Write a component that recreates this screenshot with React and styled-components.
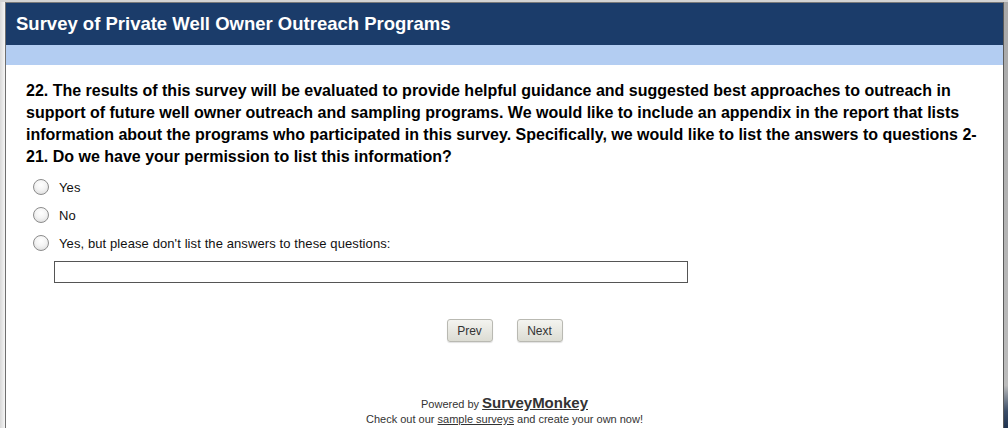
import React from "react";
import styled, { createGlobalStyle } from "styled-components";

const Global = createGlobalStyle`
  html, body { margin: 0; padding: 0; height: 100%; }
  body {
    font-family: "Liberation Sans", Arial, sans-serif;
    background: #ffffff;
    overflow: hidden;
  }
`;

const Screen = styled.div`
  display: flex;
  width: 1008px;
  height: 428px;
  background: #f0f0f0;
  border-top: 2px solid #d4d4d4;
  box-sizing: border-box;
`;

const LeftEdge = styled.div`
  width: 5px;
  flex: none;
  background: linear-gradient(to right, #d8d8d8, #f6f6f6);
`;

const RightEdge = styled.div`
  width: 4px;
  flex: none;
  background: linear-gradient(to bottom, #a8a8a8 0%, #bcbcbc 90%, #3c4e68 96%, #1f3350 100%);
`;

const Window = styled.div`
  flex: 1;
  display: flex;
  flex-direction: column;
  background: #ffffff;
  border-left: 1px solid #6f6f6f;
  border-right: 1px solid #5a5a5a;
  border-top: 1px solid #7a7a7a;
`;

const Header = styled.div`
  background: #1b3c6a;
  height: 42px;
  display: flex;
  align-items: center;
  padding-left: 10px;
  color: #ffffff;
  font-weight: bold;
  font-size: 18.5px;
`;

const SubBar = styled.div`
  background: #b3cdf2;
  height: 20px;
`;

const Body = styled.div`
  padding: 15px 26px 0 20px;
  display: flex;
  flex-direction: column;
`;

const Question = styled.div`
  font-weight: bold;
  font-size: 16px;
  line-height: 22px;
  color: #000;
`;

const Options = styled.div`
  display: flex;
  flex-direction: column;
  gap: 12px;
  margin-top: 11px;
  padding-left: 7px;
`;

const Option = styled.label`
  display: flex;
  align-items: center;
  gap: 10px;
  font-size: 13px;
  letter-spacing: 0.1px;
  color: #111;
  height: 16px;
`;

const Radio = styled.span`
  width: 14px;
  height: 14px;
  border-radius: 50%;
  border: 1px solid #8c8c8c;
  background: radial-gradient(circle at 50% 35%, #ffffff 0%, #f4f4f4 45%, #d6d6d6 100%);
  flex: none;
`;

const TextBox = styled.input`
  margin-top: 10px;
  margin-left: 28px;
  width: 634px;
  height: 22px;
  box-sizing: border-box;
  border: 1px solid #555;
  padding: 0 3px;
  font-size: 13px;
  outline: none;
`;

const Nav = styled.div`
  display: flex;
  justify-content: center;
  gap: 24px;
  margin-top: 36px;
`;

const Button = styled.button`
  width: 46px;
  height: 23px;
  border: 1px solid #b9b9b2;
  border-radius: 3px;
  background: linear-gradient(to bottom, #f4f4f0, #dcdcd3);
  box-shadow: 0 1px 1px rgba(0,0,0,0.12);
  font-family: "Liberation Sans", Arial, sans-serif;
  font-size: 12px;
  color: #333;
  padding: 0;
`;

const Footer = styled.div`
  margin-top: 53px;
  display: flex;
  flex-direction: column;
  align-items: center;
  font-size: 11px;
  color: #333;
`;

const Powered = styled.div`
  display: flex;
  align-items: baseline;
  gap: 3px;
  line-height: 15px;
`;

const Brand = styled.a`
  font-weight: bold;
  font-size: 15px;
  color: #333;
  text-decoration: underline;
`;

const Small = styled.div`
  line-height: 15px;
`;

const Link = styled.a`
  color: #333;
  text-decoration: underline;
`;

export default function App() {
  return (
    <>
      <Global />
      <Screen>
        <LeftEdge />
        <Window>
          <Header>Survey of Private Well Owner Outreach Programs</Header>
          <SubBar />
          <Body>
            <Question>
              22. The results of this survey will be evaluated to provide helpful guidance and suggested best approaches to outreach in support of future well owner outreach and sampling programs. We would like to include an appendix in the report that lists information about the programs who participated in this survey. Specifically, we would like to list the answers to questions 2-21. Do we have your permission to list this information?
            </Question>
            <Options>
              <Option><Radio />Yes</Option>
              <Option><Radio />No</Option>
              <Option><Radio />Yes, but please don't list the answers to these questions:</Option>
            </Options>
            <TextBox type="text" />
          </Body>
          <Nav>
            <Button>Prev</Button>
            <Button>Next</Button>
          </Nav>
          <Footer>
            <Powered>Powered by <Brand>SurveyMonkey</Brand></Powered>
            <Small>Check out our <Link>sample surveys</Link> and create your own now!</Small>
          </Footer>
        </Window>
        <RightEdge />
      </Screen>
    </>
  );
}
